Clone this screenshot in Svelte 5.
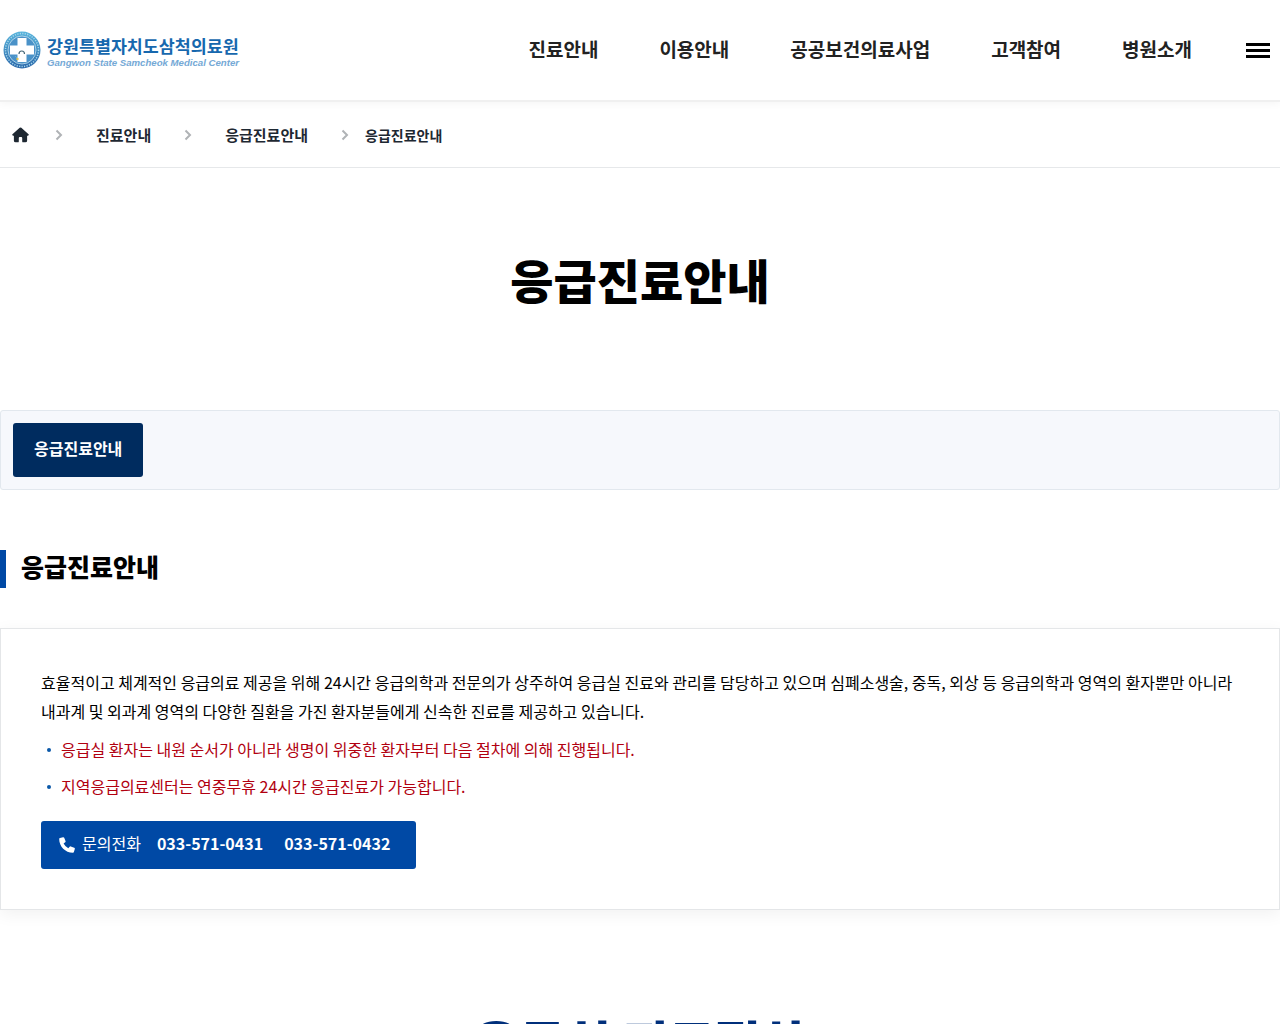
<script lang="ts">
	const menus = ["진료안내", "이용안내", "공공보건의료사업", "고객참여", "병원소개"];
	const notices = [
		"응급실 환자는 내원 순서가 아니라 생명이 위중한 환자부터 다음 절차에 의해 진행됩니다.",
		"지역응급의료센터는 연중무휴 24시간 응급진료가 가능합니다.",
	];
	const phones = ["033-571-0431", "033-571-0432"];
</script>

{#snippet chevron()}
	<svg class="chevron" viewBox="0 0 8 12" aria-hidden="true">
		<path d="M1.500 1.500 6 6l-4.500 4.500" />
	</svg>
{/snippet}

<header class="header">
	<a class="logo" href="#main">
		<svg class="emblem" viewBox="0 0 38 38" aria-hidden="true">
			<defs>
				<linearGradient id="ring" x1="0" y1="0" x2="0" y2="1">
					<stop offset="0" stop-color="#58b4dc" />
					<stop offset="1" stop-color="#2c68aa" />
				</linearGradient>
			</defs>
			<circle cx="19" cy="19" r="18.500" fill="url(#ring)" />
			<circle cx="19" cy="19" r="16.500" fill="none" stroke="#a9d8ec" stroke-width="1.500" stroke-dasharray="1.200 1.300" />
			<circle cx="19" cy="19" r="14" fill="#4a92c8" stroke="#d4ebf5" stroke-width=".7" />
			<path d="M14.500 7h9v7.500H31v9h-7.500V31h-9v-7.500H7v-9h7.500z" fill="#fff" />
			<path d="M16 23c0-4 5.500-4 5.500 0" fill="none" stroke="#467" stroke-width="1.200" />
			<circle cx="14.500" cy="28" r="1.200" fill="#e8c653" />
			<path d="m12 25 2 2" stroke="#63add3" />
		</svg>
		<svg class="wordmark" viewBox="0 0 200 38">
			<text class="name" x="0" y="22">강원특별자치도삼척의료원</text>
			<text class="name-en" x="0" y="35">Gangwon State Samcheok Medical Center</text>
		</svg>
	</a>
	<nav class="menu">
		{#each menus as menu}
			<a href="#menu">{menu}</a>
		{/each}
	</nav>
	<button class="all-menu" aria-label="전체메뉴">
		<span></span>
		<span></span>
		<span></span>
	</button>
</header>

<nav class="breadcrumb">
	<a class="home" href="#home" aria-label="홈">
		<svg viewBox="0 0 18 16" aria-hidden="true">
			<path d="M8.100.4a1.400 1.400 0 0 1 1.800 0l7.600 6.700c.6.6.3 1.600-.6 1.600h-.9V14a1.800 1.800 0 0 1-1.800 1.800h-2.400a1 1 0 0 1-1-1v-3.600a1 1 0 0 0-1-1H8.200a1 1 0 0 0-1 1v3.600a1 1 0 0 1-1 1H3.800A1.800 1.800 0 0 1 2 14V8.700h-.9C.2 8.700-.1 7.700.5 7.100z" />
		</svg>
	</a>
	{@render chevron()}
	<a class="step" href="#depth1">진료안내</a>
	{@render chevron()}
	<a class="step" href="#depth2">응급진료안내</a>
	{@render chevron()}
	<a class="current" href="#depth3">응급진료안내</a>
</nav>

<main>
	<h1>응급진료안내</h1>

	<div class="tabs">
		<a class="tab" href="#tab">응급진료안내</a>
	</div>

	<h2>응급진료안내</h2>

	<section class="card">
		<p>
			효율적이고 체계적인 응급의료 제공을 위해 24시간 응급의학과 전문의가 상주하여 응급실 진료와 관리를 담당하고 있으며 심폐소생술, 중독, 외상 등 응급의학과 영역의 환자뿐만 아니라
			내과계 및 외과계 영역의 다양한 질환을 가진 환자분들에게 신속한 진료를 제공하고 있습니다.
		</p>
		<ul>
			{#each notices as notice}
				<li>{notice}</li>
			{/each}
		</ul>
		<div class="contact">
			<svg viewBox="0 0 16 16" aria-hidden="true">
				<path d="M5.200.8a1 1 0 0 0-1.200-.6L1 1.100a1 1 0 0 0-.8 1C.2 9.700 6.300 15.800 13.900 15.800a1 1 0 0 0 1-.8l.9-3a1 1 0 0 0-.6-1.200l-3.400-1.400a1 1 0 0 0-1.200.3l-1.300 1.600a10.500 10.500 0 0 1-4.700-4.700l1.600-1.300a1 1 0 0 0 .3-1.200z" />
			</svg>
			<span>문의전화</span>
			{#each phones as phone}
				<a href="tel:{phone}">{phone}</a>
			{/each}
		</div>
	</section>

	<h2 class="process">응급실 진료절차</h2>
</main>

<style>
	:global(body) {
		font-family: "Noto Sans CJK KR", sans-serif;
		font-size: 16px;
		color: #000;
		background: #fff;
		word-break: keep-all;
	}
	a {
		color: inherit;
		text-decoration: none;
	}
	.header {
		display: flex;
		align-items: center;
		height: 100px;
		padding: 0 10px 0 3px;
		border-bottom: 2px solid #f0f0f0;
		box-shadow: 0 2px 8px rgba(0, 0, 0, 0.04);
	}
	.logo {
		display: flex;
		align-items: center;
		gap: 6px;
	}
	.emblem {
		width: 38px;
		height: 38px;
	}
	.wordmark {
		width: 193px;
		height: 37px;
		overflow: visible;
	}
	.name {
		font-size: 18px;
		font-weight: 700;
		fill: #1768ae;
	}
	.name-en {
		font-family: "Liberation Sans", Arial, sans-serif;
		font-size: 10px;
		font-style: italic;
		font-weight: 700;
		fill: #75a9d6;
	}
	.menu {
		display: flex;
		gap: 61px;
		margin-left: auto;
		margin-right: 54px;
		padding-bottom: 3px;
	}
	.menu a {
		font-size: 19px;
		font-weight: 700;
		line-height: 28px;
		color: #222;
	}
	.all-menu {
		display: flex;
		flex-direction: column;
		gap: 3px;
		width: 24px;
		padding: 0;
		border: 0;
		background: none;
	}
	.all-menu span {
		height: 3px;
		background: #000;
	}
	.breadcrumb {
		display: flex;
		align-items: center;
		height: 65px;
		padding-left: 12px;
		border-bottom: 1px solid #e6e8ea;
		color: #1e2832;
		font-weight: 700;
	}
	.home {
		display: flex;
		margin-right: 26px;
	}
	.home svg {
		width: 17px;
		height: 16px;
		fill: #1e2832;
	}
	.chevron {
		width: 8px;
		height: 12px;
		fill: none;
		stroke: #b0b3b6;
		stroke-width: 2;
	}
	.step {
		margin: 0 33px;
		font-size: 15px;
	}
	.current {
		margin-left: 16px;
		font-size: 14px;
	}
	h1 {
		margin: 76px 0 96px;
		font-size: 47px;
		font-weight: 900;
		line-height: 70px;
		text-align: center;
	}
	.tabs {
		display: flex;
		padding: 12px;
		border: 1px solid #e2e8ee;
		border-radius: 3px;
		background: #f6f8fc;
	}
	.tab {
		padding: 0 21px 4px;
		border-radius: 3px;
		background: #002c5f;
		color: #fff;
		font-size: 16px;
		font-weight: 700;
		line-height: 50px;
	}
	h2 {
		margin: 60px 0 40px;
		padding: 0 0 6px 15px;
		border-left: 6px solid #0049a5;
		font-size: 25px;
		font-weight: 900;
		line-height: 32px;
	}
	.card {
		padding: 39px 40px 40px;
		border: 1px solid #e4e6e8;
		box-shadow: 0 4px 16px rgba(0, 0, 0, 0.06);
	}
	p {
		margin: 0;
		line-height: 29px;
	}
	ul {
		margin: 9px 0 20px;
		padding: 0;
		list-style: none;
	}
	li {
		display: flex;
		align-items: center;
		line-height: 29px;
		color: #b10010;
	}
	li + li {
		margin-top: 8px;
	}
	li::before {
		content: "";
		width: 4px;
		height: 4px;
		margin: 0 10px 0 6px;
		border-radius: 50%;
		background: #0a58a8;
	}
	.contact {
		display: inline-flex;
		align-items: center;
		height: 48px;
		padding: 0 26px 0 18px;
		border-radius: 3px;
		background: #0049a5;
		color: #fff;
		vertical-align: top;
	}
	.contact svg {
		width: 16px;
		height: 16px;
		margin-right: 7px;
		fill: #fff;
	}
	.contact span,
	.contact a {
		padding-bottom: 4px;
	}
	.contact a {
		margin-left: 16px;
		font-weight: 700;
	}
	.contact a + a {
		margin-left: 21px;
	}
	.process {
		margin: 96px 0 40px;
		padding: 0;
		border: 0;
		color: #002f7b;
		font-size: 50px;
		font-weight: 900;
		line-height: 70px;
		text-align: center;
	}
</style>
